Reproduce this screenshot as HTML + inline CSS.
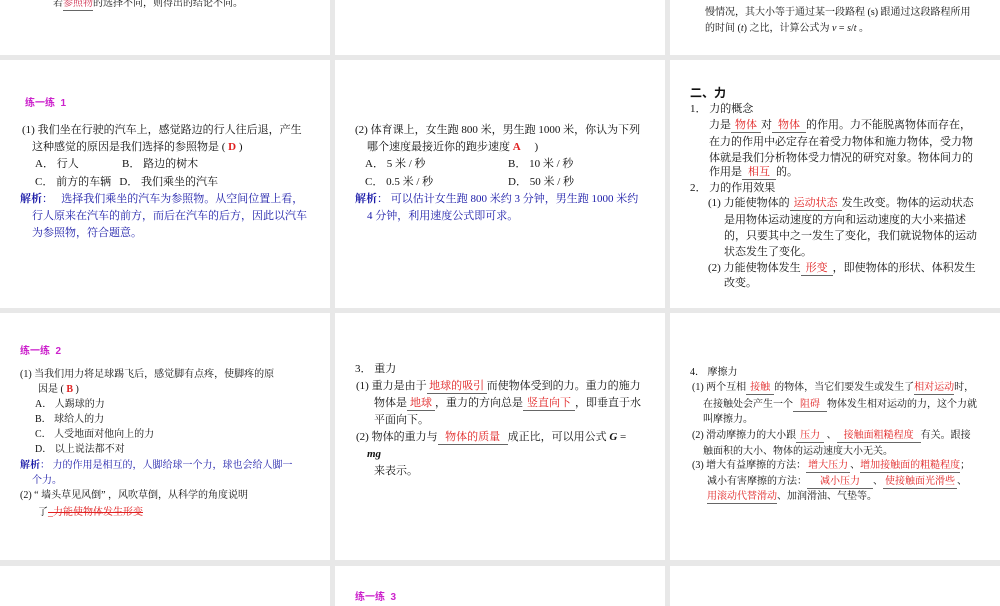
<!DOCTYPE html>
<html><head><meta charset="utf-8"><style>
body{margin:0;width:1000px;height:600px;background:#e8e8e8;position:relative;overflow:hidden;font-family:"Liberation Serif","Noto Serif CJK SC","Noto Sans CJK SC",serif;color:#111}
.p{position:absolute;background:#fff}
.l{position:absolute;white-space:nowrap;line-height:16px;font-size:11px}
.s{font-size:10px}
.m{color:#cc22cc;font-family:"Liberation Sans","Noto Sans CJK SC",sans-serif;font-weight:bold}
.b{color:#1a1aa8}
.r{color:#e02020}
.u{display:inline-block;border-bottom:1px solid #666;text-align:center;line-height:13px;color:#e02020}
</style></head><body>
<div class="p" style="left:0;top:0;width:330px;height:55px"></div>
<div class="p" style="left:335px;top:0;width:330px;height:55px"></div>
<div class="p" style="left:670px;top:0;width:330px;height:55px"></div>
<div class="p" style="left:0;top:60px;width:330px;height:248px"></div>
<div class="p" style="left:335px;top:60px;width:330px;height:248px"></div>
<div class="p" style="left:670px;top:60px;width:330px;height:248px"></div>
<div class="p" style="left:0;top:313px;width:330px;height:247px"></div>
<div class="p" style="left:335px;top:313px;width:330px;height:247px"></div>
<div class="p" style="left:670px;top:313px;width:330px;height:247px"></div>
<div class="p" style="left:0;top:566px;width:330px;height:40px"></div>
<div class="p" style="left:335px;top:566px;width:330px;height:40px"></div>
<div class="p" style="left:670px;top:566px;width:330px;height:40px"></div>

<!-- top row -->
<div class="l s" style="left:53px;top:-4px">若<span class="u" style="color:#d03050">参照物</span>的选择不同，则得出的结论不同。</div>
<div class="l s" style="left:705px;top:5px">慢情况，其大小等于通过某一段路程 (s) 跟通过这段路程所用</div>
<div class="l s" style="left:705px;top:21px">的时间 (<i>t</i>) 之比，计算公式为 <i>v</i> = <i>s</i>/<i>t</i> 。</div>

<!-- col1 row2 -->
<div class="l m s" style="left:25px;top:96px">练一练 &nbsp;1</div>
<div class="l" style="left:22px;top:122px">(1) 我们坐在行驶的汽车上，感觉路边的行人往后退，产生</div>
<div class="l" style="left:32px;top:139px">这种感觉的原因是我们选择的参照物是 ( <b class="r">D</b> )</div>
<div class="l" style="left:35px;top:156px">A． 行人</div><div class="l" style="left:122px;top:156px">B． 路边的树木</div>
<div class="l" style="left:35px;top:174px">C． 前方的车辆 &nbsp; D． 我们乘坐的汽车</div>
<div class="l b" style="left:20px;top:191px"><b>解析</b>： &nbsp; 选择我们乘坐的汽车为参照物。从空间位置上看，</div>
<div class="l b" style="left:32px;top:208px">行人原来在汽车的前方，而后在汽车的后方，因此以汽车</div>
<div class="l b" style="left:32px;top:225px">为参照物，符合题意。</div>

<!-- col2 row2 -->
<div class="l" style="left:355px;top:122px">(2) 体育课上，女生跑 800 米，男生跑 1000 米，你认为下列</div>
<div class="l" style="left:367px;top:139px">哪个速度最接近你的跑步速度 <b class="r">A</b> &nbsp; &nbsp; )</div>
<div class="l" style="left:365px;top:156px">A． 5 米 / 秒</div><div class="l" style="left:508px;top:156px">B． 10 米 / 秒</div>
<div class="l" style="left:365px;top:174px">C． 0.5 米 / 秒</div><div class="l" style="left:508px;top:174px">D． 50 米 / 秒</div>
<div class="l b" style="left:355px;top:191px"><b>解析</b>： 可以估计女生跑 800 米约 3 分钟，男生跑 1000 米约</div>
<div class="l b" style="left:367px;top:208px">4 分钟，利用速度公式即可求。</div>

<!-- col3 row2 -->
<div class="l" style="left:690px;top:85px;font-weight:bold;font-size:12px;font-family:'Liberation Sans','Noto Sans CJK SC',sans-serif">二、力</div>
<div class="l" style="left:690px;top:101px">1． 力的概念</div>
<div class="l" style="left:709px;top:117px">力是<span class="u" style="width:30px">物体</span>对<span class="u" style="width:34px">物体</span>的作用。力不能脱离物体而存在，</div>
<div class="l" style="left:709px;top:134px">在力的作用中必定存在着受力物体和施力物体，受力物</div>
<div class="l" style="left:709px;top:150px">体就是我们分析物体受力情况的研究对象。物体间力的</div>
<div class="l" style="left:709px;top:164px">作用是<span class="u" style="width:34px">相互</span>的。</div>
<div class="l" style="left:690px;top:180px">2． 力的作用效果</div>
<div class="l" style="left:708px;top:195px">(1) 力能使物体的<span class="u" style="width:52px">运动状态</span>发生改变。物体的运动状态</div>
<div class="l" style="left:724px;top:212px">是用物体运动速度的方向和运动速度的大小来描述</div>
<div class="l" style="left:724px;top:228px">的，只要其中之一发生了变化，我们就说物体的运动</div>
<div class="l" style="left:724px;top:244px">状态发生了变化。</div>
<div class="l" style="left:708px;top:260px">(2) 力能使物体发生<span class="u" style="width:32px">形变</span>，即使物体的形状、体积发生</div>
<div class="l" style="left:724px;top:275px">改变。</div>

<!-- col1 row3 -->
<div class="l m s" style="left:20px;top:344px">练一练 &nbsp;2</div>
<div class="l s" style="left:20px;top:367px">(1) 当我们用力将足球踢飞后，感觉脚有点疼，使脚疼的原</div>
<div class="l s" style="left:38px;top:382px">因是 ( <b class="r">B</b> )</div>
<div class="l s" style="left:35px;top:397px">A． 人踢球的力</div>
<div class="l s" style="left:35px;top:412px">B． 球给人的力</div>
<div class="l s" style="left:35px;top:427px">C． 人受地面对他向上的力</div>
<div class="l s" style="left:35px;top:442px">D． 以上说法都不对</div>
<div class="l s b" style="left:20px;top:458px"><b>解析</b>： 力的作用是相互的，人脚给球一个力，球也会给人脚一</div>
<div class="l s b" style="left:32px;top:473px">个力。</div>
<div class="l s" style="left:20px;top:488px">(2) “ 墙头草见风倒” ，风吹草倒，从科学的角度说明</div>
<div class="l s" style="left:38px;top:505px">了<span class="r" style="text-decoration:line-through">_力能使物体发生形变</span></div>

<!-- col2 row3 -->
<div class="l" style="left:355px;top:361px">3． 重力</div>
<div class="l" style="left:356px;top:378px">(1) 重力是由于<span class="u" style="width:60px">地球的吸引</span>而使物体受到的力。重力的施力</div>
<div class="l" style="left:374px;top:395px">物体是<span class="u" style="width:28px">地球</span>，重力的方向总是<span class="u" style="width:52px">竖直向下</span>，即垂直于水</div>
<div class="l" style="left:374px;top:412px">平面向下。</div>
<div class="l" style="left:356px;top:429px">(2) 物体的重力与<span class="u" style="width:70px">物体的质量</span>成正比，可以用公式 <b><i>G</i></b> =</div>
<div class="l" style="left:367px;top:446px"><b><i>mg</i></b></div>
<div class="l" style="left:374px;top:463px">来表示。</div>
<div class="l m s" style="left:355px;top:590px">练一练 &nbsp;3</div>

<!-- col3 row3 -->
<div class="l s" style="left:690px;top:365px">4． 摩擦力</div>
<div class="l s" style="left:692px;top:380px">(1) 两个互相<span class="u" style="width:28px">接触</span>的物体，当它们要发生或发生了<span class="u">相对运动</span>时，</div>
<div class="l s" style="left:703px;top:397px">在接触处会产生一个<span class="u" style="width:34px">阻碍</span>物体发生相对运动的力，这个力就</div>
<div class="l s" style="left:703px;top:412px">叫摩擦力。</div>
<div class="l s" style="left:692px;top:428px">(2) 滑动摩擦力的大小跟<span class="u" style="width:28px">压力</span> 、<span class="u" style="width:84px">接触面粗糙程度</span>有关。跟接</div>
<div class="l s" style="left:703px;top:444px">触面积的大小、物体的运动速度大小无关。</div>
<div class="l s" style="left:692px;top:458px">(3) 增大有益摩擦的方法：<span class="u" style="width:44px">增大压力</span>、<span class="u">增加接触面的粗糙程度</span>；</div>
<div class="l s" style="left:707px;top:474px">减小有害摩擦的方法：<span class="u" style="width:66px">减小压力</span>、<span class="u" style="width:74px">使接触面光滑些</span>、</div>
<div class="l s" style="left:707px;top:489px"><span class="u">用滚动代替滑动</span>、加润滑油、气垫等。</div>
</body></html>
